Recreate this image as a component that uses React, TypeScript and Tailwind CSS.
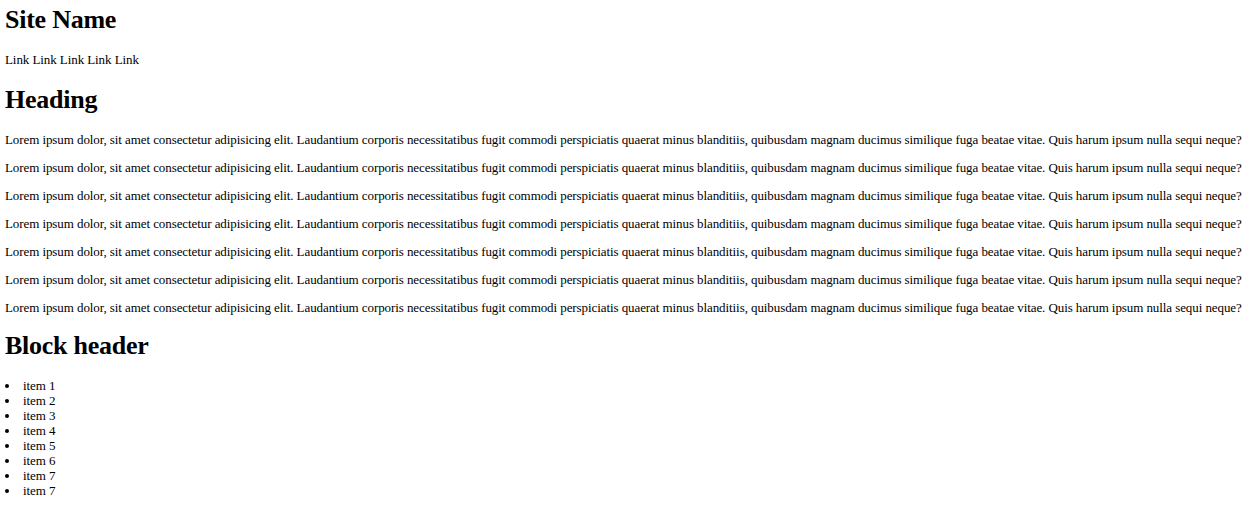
import React from 'react';

const lorem =
  'Lorem ipsum dolor, sit amet consectetur adipisicing elit. Laudantium corporis necessitatibus fugit commodi perspiciatis quaerat minus blanditiis, quibusdam magnam ducimus similique fuga beatae vitae. Quis harum ipsum nulla sequi neque?';

const items = ['item 1', 'item 2', 'item 3', 'item 4', 'item 5', 'item 6', 'item 7', 'item 7'];

export default function App() {
  return (
    <div className="min-h-screen bg-white px-[5px] pt-[5px] text-[13px] leading-[15px] text-black font-['Liberation_Serif',serif] tracking-[-0.08px]">
      <header>
        <h1 className="text-[26px] leading-[30px] font-bold tracking-[-0.25px]">Site Name</h1>
        <nav className="mt-[16.5px]">
          <a href="#">Link</a> <a href="#">Link</a> <a href="#">Link</a> <a href="#">Link</a>{' '}
          <a href="#">Link</a>
        </nav>
      </header>

      <main>
        <h1 className="mt-[18.5px] text-[26px] leading-[30px] font-bold tracking-[-0.25px]">Heading</h1>
        <div className="mt-[16.5px] flex flex-col gap-[13px]">
          {Array.from({ length: 7 }).map((_, i) => (
            <p key={i} className="whitespace-nowrap">
              {lorem}
            </p>
          ))}
        </div>

        <h1 className="mt-[16.5px] text-[26px] leading-[30px] font-bold tracking-[-0.25px]">Block header</h1>
        <ul className="mt-[16.5px] list-disc list-inside">
          {items.map((item, i) => (
            <li key={i}>{item}</li>
          ))}
        </ul>
      </main>
    </div>
  );
}
